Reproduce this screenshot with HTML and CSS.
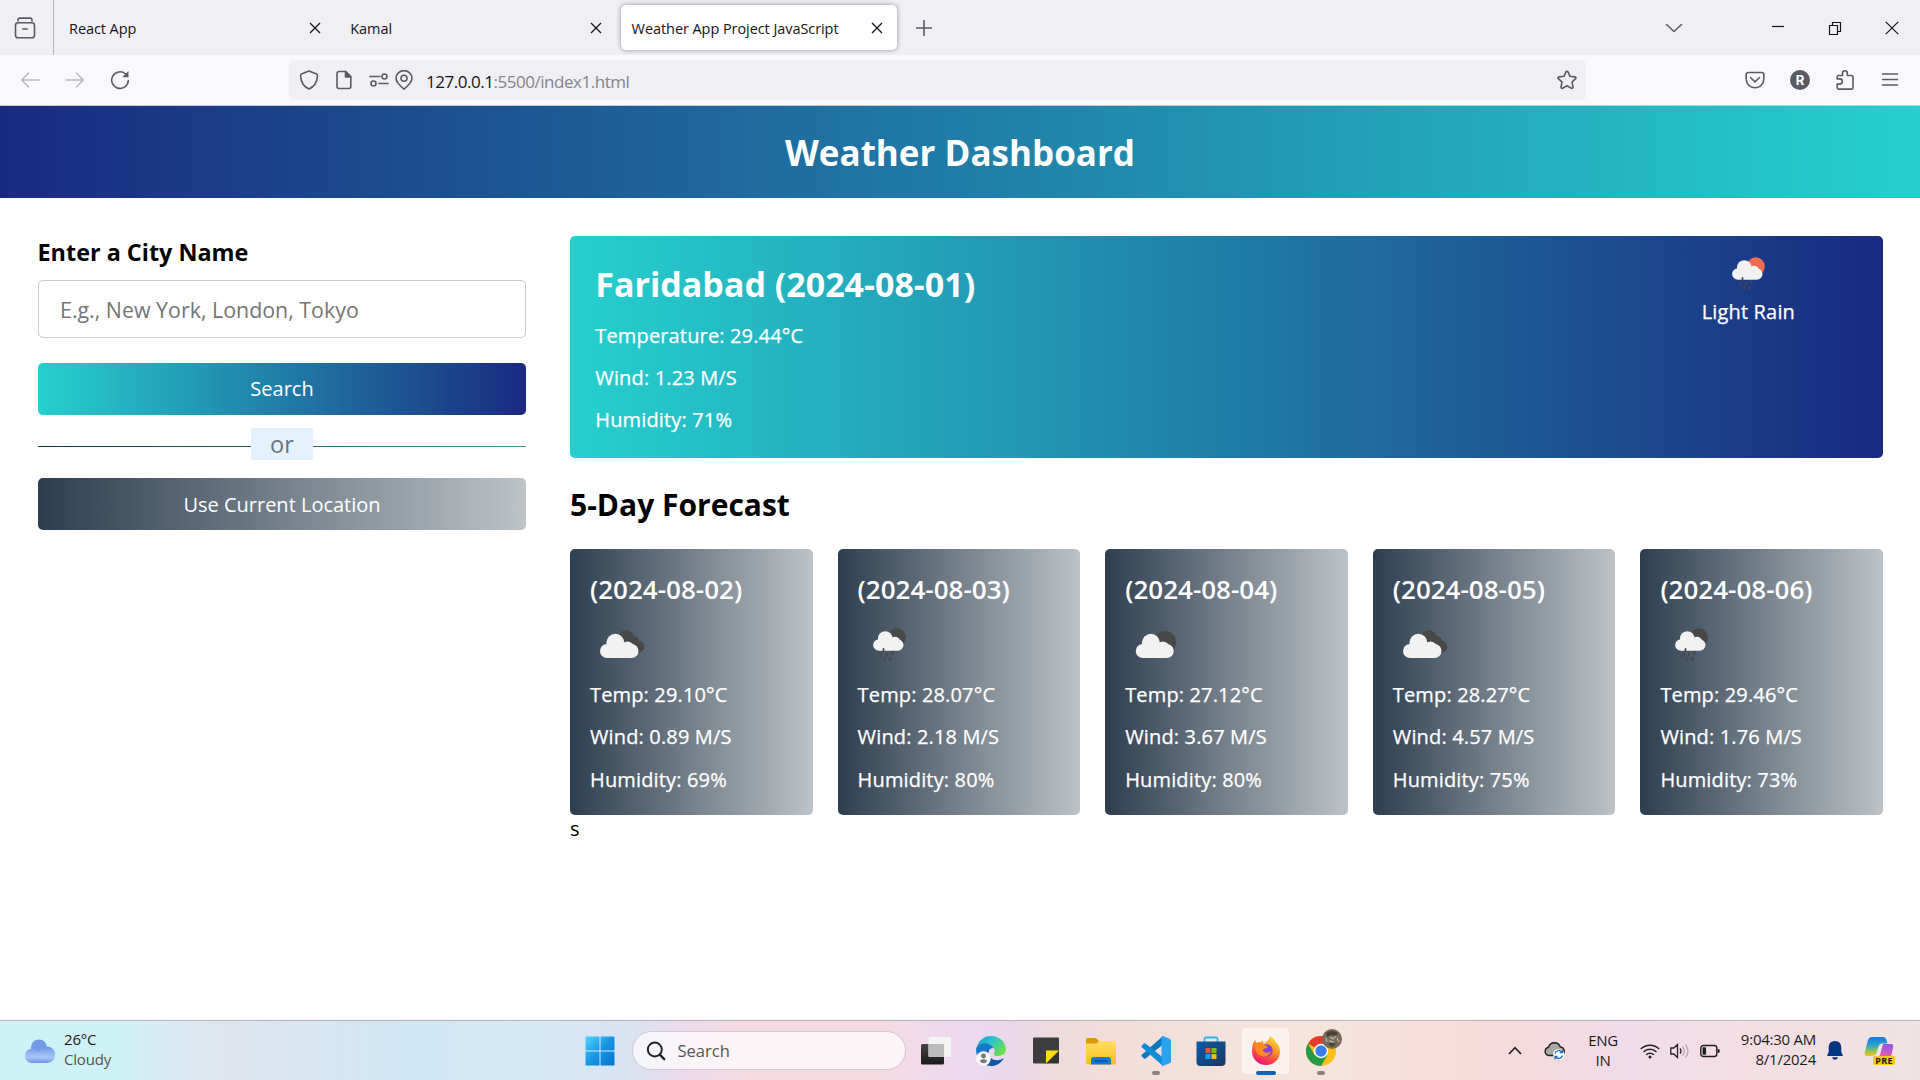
FILE: index.html
```html
<!DOCTYPE html>
<html lang="en">
<head>
<meta charset="utf-8">
<title>Weather App Project JavaScript</title>
<link rel="stylesheet" href="styles.css">
</head>
<body>
<svg class="defs" aria-hidden="true">
  <symbol id="cloudy" viewBox="0 0 50 50">
    <g fill="#484848"><circle cx="28.8" cy="19.8" r="6.1"/><circle cx="35" cy="22.6" r="4.2"/><circle cx="38.6" cy="26.9" r="4.8"/><path d="M24 20h14v11H28z"/></g>
    <g fill="#f2f2f2"><rect x="8" y="24.8" width="30.8" height="11.2" rx="5.6"/><circle cx="20.3" cy="23.8" r="7.2"/><circle cx="30" cy="27.6" r="4.9"/><path d="M14 26h18v8H14z"/></g>
  </symbol>
  <symbol id="partly" viewBox="0 0 50 50">
    <circle cx="32" cy="23.3" r="8.9" fill="#484848"/>
    <g fill="#f2f2f2"><rect x="8.6" y="24.8" width="30.4" height="11.2" rx="5.6"/><circle cx="20.7" cy="23.8" r="7.2"/><circle cx="30.3" cy="27.6" r="4.9"/><path d="M14 26h18v8H14z"/></g>
  </symbol>
  <symbol id="rain" viewBox="0 0 50 50">
    <circle cx="31" cy="19.5" r="7.3" fill="currentColor"/>
    <g fill="#f2f2f2"><rect x="12.1" y="21" width="24.3" height="9.2" rx="4.6"/><circle cx="21.8" cy="20.4" r="5.8"/><circle cx="29.6" cy="23" r="4"/><path d="M17 22h14v7H17z"/></g>
    <path d="M20.4 28.6v2.200M19 32.600l-1 1.800M23.600 32.400l-1 1.800M28 31l-1 1.800M22 36.400l-.6 1.100M26.300 35.800l-.9 1.600" stroke="#484848" stroke-width="1.400" stroke-linecap="round"/>
  </symbol>
  <symbol id="x" viewBox="0 0 12 12"><path d="M1 1l10 10M11 1L1 11" stroke="currentColor" stroke-width="1.3" fill="none"/></symbol>
</svg>

<div class="tabstrip">
  <div class="view"><svg width="22" height="22" viewBox="0 0 22 22" class="line"><path d="M4 4V3a2 2 0 0 1 2-1.900h10A2 2 0 0 1 18 3v1"/><rect x="1.5" y="5.8" width="19" height="15" rx="2.6"/><path d="M8.8 12h4.400"/></svg></div>
  <div class="tab"><span class="tab-text">React App</span><svg class="close"><use href="#x"/></svg></div>
  <div class="tab"><span class="tab-text">Kamal</span><svg class="close"><use href="#x"/></svg></div>
  <div class="tab active"><span class="tab-text">Weather App Project JavaScript</span><svg class="close"><use href="#x"/></svg></div>
  <svg class="plus line" width="16" height="16" viewBox="0 0 16 16"><path d="M8 .5v15M.5 8h15"/></svg>
  <div class="window-buttons">
    <svg width="18" height="18" viewBox="0 0 18 18" class="line"><path d="M1.500 5.500l7.500 7 7.500-7"/></svg>
    <svg width="14" height="14" viewBox="0 0 14 14" class="thin"><path d="M1 5.500h12"/></svg>
    <svg width="14" height="14" viewBox="0 0 14 14" class="thin"><path d="M1.500 4.500h8v9h-8zM4.500 4.500v-3h8v9h-3"/></svg>
    <svg width="14" height="14" viewBox="0 0 14 14" class="thin"><path d="M.8.8l12.400 12.400M13.200.8L.8 13.200"/></svg>
  </div>
</div>

<div class="toolbar">
  <div class="nav">
    <svg width="20" height="20" viewBox="0 0 20 20" class="line dim"><path d="M19 10H2M8.500 3.200L1.700 10l6.800 6.800"/></svg>
    <svg width="20" height="20" viewBox="0 0 20 20" class="line dim"><path d="M1 10h17M11.500 3.200l6.800 6.800-6.800 6.800"/></svg>
    <svg width="20" height="20" viewBox="0 0 20 20" class="line"><path d="M15.600 4A8.300 8.300 0 1 0 18.300 10.500"/><path d="M18.500 1v6.200h-6.200z" fill="#5b5b66" stroke="none"/></svg>
  </div>
  <div class="urlbar">
    <svg width="20" height="20" viewBox="0 0 20 20" class="line"><path d="M10 1l7.600 3c.9.400.9 1 .800 2.400C18 12.500 15.500 16.500 10 19 4.500 16.500 2 12.500 1.600 6.400 1.500 5 1.500 4.400 2.400 4z"/></svg>
    <svg width="20" height="20" viewBox="0 0 20 20" class="line"><path d="M5 1.500h6.800l5 5v10a2 2 0 0 1-2 2H5a2 2 0 0 1-2-2v-13a2 2 0 0 1 2-2z"/><path d="M11.500 1.500v5.500h5.300z" fill="#5b5b66"/></svg>
    <svg width="20" height="20" viewBox="0 0 20 20" class="line"><path d="M1 6.500h10M10 13.500h9"/><circle cx="15.500" cy="6.500" r="2.500"/><circle cx="4.500" cy="13.500" r="2.500"/></svg>
    <svg width="20" height="20" viewBox="0 0 20 20" class="line pin"><path d="M10 19.200C5.500 15.500 2 12 2 8.300a8 7.700 0 0 1 16 0c0 3.700-3.500 7.200-8 10.900z"/><circle cx="10" cy="8.300" r="3"/></svg>
    <span class="url"><b>127.0.0.1</b>:5500/index1.html</span>
    <svg width="20" height="20" viewBox="0 0 20 20" class="line star"><path d="M10 1.200c.5 0 .8.300 1 .700l2 4.400 4.900.600c1 .1 1.400 1.200.7 1.800l-3.600 3.400 1 4.900c.1.900-.8 1.600-1.600 1.200L10 15.800l-4.400 2.400c-.8.400-1.700-.3-1.600-1.200l1-4.900L1.400 8.700c-.7-.6-.3-1.700.7-1.800L7 6.300l2-4.400c.2-.4.500-.7 1-.7z"/></svg>
  </div>
  <div class="tools">
    <svg width="20" height="20" viewBox="0 0 20 20" class="line"><path d="M3.200 2.500h13.600a2 2 0 0 1 2 2V9a8.800 8.800 0 0 1-17.600 0V4.500a2 2 0 0 1 2-2z"/><path d="M5.500 7.500L10 11.800l4.500-4.300"/></svg>
    <span class="account">R</span>
    <svg width="20" height="20" viewBox="0 0 20 20" class="line"><path d="M2.200 8.300V6.800a1.300 1.300 0 0 1 1.300-1.300h4V3.200a2.400 2.400 0 0 1 4.800 0v2.300h4.400A1.300 1.300 0 0 1 18 6.800v11a1.300 1.300 0 0 1-1.300 1.300H3.500a1.300 1.300 0 0 1-1.300-1.300v-3.700h2.600a2.600 2.600 0 0 0 0-5.200H2.200z"/></svg>
    <svg width="20" height="20" viewBox="0 0 20 20" class="line"><path d="M2.500 4h15M2.500 9.500h15M2.500 15h15"/></svg>
  </div>
</div>

<main class="page">
  <h1>Weather Dashboard</h1>
  <div class="container">
    <section class="weather-input">
      <h3>Enter a City Name</h3>
      <input class="city-input" type="text" placeholder="E.g., New York, London, Tokyo">
      <button class="search-btn">Search</button>
      <div class="separator"><span>or</span></div>
      <button class="location-btn">Use Current Location</button>
    </section>
    <section class="weather-data">
      <div class="current-weather">
        <div>
          <h2>Faridabad (2024-08-01)</h2>
          <h6>Temperature: 29.44°C</h6>
          <h6>Wind: 1.23 M/S</h6>
          <h6>Humidity: 71%</h6>
        </div>
        <div class="condition">
          <svg class="wicon day"><use href="#rain"/></svg>
          <h6>Light Rain</h6>
        </div>
      </div>
      <div class="days-forecast">
        <h2>5-Day Forecast</h2>
        <ul class="weather-cards">
          <li class="card"><h3>(2024-08-02)</h3><svg class="wicon"><use href="#cloudy"/></svg><h6>Temp: 29.10°C</h6><h6>Wind: 0.89 M/S</h6><h6>Humidity: 69%</h6></li>
          <li class="card"><h3>(2024-08-03)</h3><svg class="wicon"><use href="#rain"/></svg><h6>Temp: 28.07°C</h6><h6>Wind: 2.18 M/S</h6><h6>Humidity: 80%</h6></li>
          <li class="card"><h3>(2024-08-04)</h3><svg class="wicon"><use href="#partly"/></svg><h6>Temp: 27.12°C</h6><h6>Wind: 3.67 M/S</h6><h6>Humidity: 80%</h6></li>
          <li class="card"><h3>(2024-08-05)</h3><svg class="wicon"><use href="#cloudy"/></svg><h6>Temp: 28.27°C</h6><h6>Wind: 4.57 M/S</h6><h6>Humidity: 75%</h6></li>
          <li class="card"><h3>(2024-08-06)</h3><svg class="wicon"><use href="#rain"/></svg><h6>Temp: 29.46°C</h6><h6>Wind: 1.76 M/S</h6><h6>Humidity: 73%</h6></li>
        </ul>
        s
      </div>
    </section>
  </div>
</main>

<footer class="taskbar">
  <div class="widget">
    <svg width="31" height="26" viewBox="0 0 31 26"><defs><linearGradient id="wc" x2="0" y2="1"><stop offset="0" stop-color="#6f95e4"/><stop offset=".65" stop-color="#a9c8f8"/><stop offset="1" stop-color="#6c92e4"/></linearGradient></defs><circle cx="15" cy="9.500" r="8" fill="#7499e6"/><path d="M7.500 25a7.200 7.200 0 0 1-.5-14.300c4-.5 6 1.500 8 3.300 1.500-4 4-5.600 8-5.500A8.200 8.200 0 0 1 23 25z" fill="url(#wc)"/></svg>
    <div class="widget-text"><span>26°C</span><span class="soft">Cloudy</span></div>
  </div>
  <div class="apps">
    <svg class="start" width="30" height="30" viewBox="0 0 30 30"><defs><linearGradient id="wn" x2="1" y2="1"><stop offset="0" stop-color="#4fd3fc"/><stop offset=".5" stop-color="#1795e2"/><stop offset="1" stop-color="#0173d3"/></linearGradient></defs><path d="M1.500.5H14.500V14.500H.5V1.500q0-1 1-1zM15.500.5h13q1 0 1 1V14.500h-14zM.5 15.500H14.500v14H1.500q-1 0-1-1zM15.500 15.500h14v13q0 1-1 1h-13z" fill="url(#wn)"/></svg>
    <div class="task-search"><svg width="20" height="20" viewBox="0 0 20 20"><circle cx="8.800" cy="8.500" r="7" fill="none" stroke="#222" stroke-width="1.900"/><path d="M13.800 13.600l4.400 4.600" stroke="#222" stroke-width="2.400" stroke-linecap="round"/></svg><span>Search</span></div>
    <div class="app"><svg width="30" height="30" viewBox="0 0 30 30"><defs><linearGradient id="tv" x2="0" y2="1"><stop offset="0" stop-color="#444"/><stop offset="1" stop-color="#1b1b1b"/></linearGradient></defs><rect x="0" y="8" width="23" height="20.500" rx="1.500" fill="url(#tv)"/><rect x="7.500" y="1" width="22.500" height="20" rx="1.200" fill="#f4f4f4"/><path d="M7.500 8H23v13H8.500q-1 0-1-1z" fill="#bcbcbc"/></svg></div>
    <div class="app"><svg width="30" height="30" viewBox="0 0 30 30"><defs><linearGradient id="e1" x2="1" y2=".6"><stop offset="0" stop-color="#1a8fd8"/><stop offset=".5" stop-color="#2cc3d0"/><stop offset="1" stop-color="#6be04a"/></linearGradient></defs><path d="M.5 12C3 3 9 0 15 0c9 0 15 7 15 13 0 5-4 7-8 7-3.500 0-5-1.500-4-3 2-3 0-6-4-6C8 11 4 15 4 20z" fill="url(#e1)"/><path d="M.5 12C4 6 14 6 17 12c-5 0-6 6-2 10 3.500 3 8 3 13 0-3 5.500-8 8-13 8C5 30-.5 21 .5 12z" fill="#0f59a8"/><path d="M.5 12C4 6 14 6 17 12c-6 0-8 5-6.500 11L2 22Q0 18 .5 12z" fill="#1678c8"/><circle cx="7.500" cy="22.500" r="7.300" fill="#f8f8f8"/><circle cx="7.500" cy="20" r="2.400" fill="#777"/><path d="M4 24.200q3.500-1.800 7 0c0 4-7 4-7 0z" fill="#777"/></svg></div>
    <div class="app"><svg width="26" height="27" viewBox="0 0 26 27"><path d="M1 .5h24q1 0 1 1V14L14 26.500H1q-1 0-1-1v-24q0-1 1-1z" fill="#3d3d3d"/><path d="M26 13.500v12q0 1-1 1H13z" fill="#333"/><path d="M13 13.500h13L13 26.500z" fill="#ffdb0c"/></svg></div>
    <div class="app"><svg width="30" height="30" viewBox="0 0 30 30"><defs><linearGradient id="fd" x2="0" y2="1"><stop offset="0" stop-color="#ffdd63"/><stop offset="1" stop-color="#fbbd20"/></linearGradient></defs><path d="M0 3.500q0-1.500 1.500-1.500H9q1 0 1.700.700L13 5v4H0z" fill="#d99a0c"/><path d="M0 7.500h10.500L13 5h15.500Q30 5 30 6.500V27q0 1.500-1.500 1.500h-27Q0 28.500 0 27z" fill="url(#fd)"/><path d="M5 28.500V24q0-3 3-3h14q3 0 3 3v4.500z" fill="#1477cc"/><path d="M8.500 25h13" stroke="#0a4b93" stroke-width="1.300"/></svg></div>
    <div class="app run"><svg width="30" height="30" viewBox="0 0 30 30"><path d="M22 0v8.500L4.500 22.500q-.8.500-1.500 0L.8 20.600q-1-.9 0-1.900z" fill="#0a77bf"/><path d="M.8 11.300q-1-1 0-1.900L3 7.500q.7-.500 1.500 0L22 21.500V30z" fill="#108bd4"/><path d="M22 0l7 3q1 .5 1 1.500v21q0 1-1 1.500l-7 3q-1.500.2-1.500-1.500v-27Q20.500-.2 22 0z" fill="#27a3f0"/></svg></div>
    <div class="app"><svg width="30" height="30" viewBox="0 0 30 30"><defs><linearGradient id="st" x2="1" y2="1"><stop offset="0" stop-color="#0a5cab"/><stop offset="1" stop-color="#1f355e"/></linearGradient></defs><path d="M8.500 6V3q0-1.500 1.500-1.500h10q1.500 0 1.500 1.500v3" stroke="#27b8f2" stroke-width="1.800" fill="none"/><path d="M.5 5.500h29V26q0 4-4 4h-21q-4 0-4-4z" fill="url(#st)"/><path d="M9.500 12h5v5h-5z" fill="#f35325"/><path d="M15.500 12h5v5h-5z" fill="#81bc06"/><path d="M9.500 18h5v5h-5z" fill="#05a6f0"/><path d="M15.500 18h5v5h-5z" fill="#ffba08"/></svg></div>
    <div class="app current"><svg width="28" height="29" viewBox="0 0 28 29"><defs><linearGradient id="ff" x1=".8" x2=".3" y2="1"><stop offset="0" stop-color="#ffe43c"/><stop offset=".4" stop-color="#ff9625"/><stop offset=".75" stop-color="#ff3d48"/><stop offset="1" stop-color="#e01483"/></linearGradient></defs><path d="M18 0c3 1.500 5 4 6 6.500 2 1 4 5 4 9C28 23 22 29 14 29S0 23 0 15.500C0 10 1 6.500 3 4l1.500 3C6 6 7 6 8.500 6.200L11 4.500 11.500 8C15 5 17 4 18 0z" fill="url(#ff)"/><circle cx="14.500" cy="14.500" r="6.200" fill="#8a3fdc"/><path d="M3 8c4-2 8-1 10 1.500l3 1c-1 2.500-5 1.500-5 4 1 2.500 5 3 8 .5-1 5-7 7-11 4.500C4 17 2 12 3 8z" fill="#ff8a1f"/></svg></div>
    <div class="app run chrome"><svg width="30" height="30" viewBox="0 0 30 30"><circle cx="15" cy="15" r="15" fill="#fbc116"/><path d="M15 15L2 7.500a15 15 0 0 1 26 0z" fill="#e33b2e"/><path d="M2 7.500A15 15 0 0 0 15 30l6.500-11.300L8.500 18.700z" fill="#259b48"/><circle cx="15" cy="15" r="7.200" fill="#fff"/><circle cx="15" cy="15" r="5.700" fill="#3b7ded"/></svg>
      <svg class="avatar" width="20" height="20" viewBox="0 0 20 20"><circle cx="10" cy="10" r="10" fill="#786a58"/><path d="M4 4q6-4 12 0l-2 3-5-1-4 2zM6 15q4-2 8 0l-4 3z" fill="#4b4036"/><path d="M8 8l3 2 3-3M7 12l5 1M15 9l2 4M4 9l1 4" stroke="#b3b3a2" stroke-width="1.300" fill="none"/></svg></div>
  </div>
  <div class="tray">
    <svg class="up" width="14" height="9" viewBox="0 0 14 9"><path d="M1 8l6-6.300L13 8" fill="none" stroke="#222" stroke-width="1.700"/></svg>
    <svg class="drive" width="21" height="18" viewBox="0 0 21 18"><path d="M5 13.500a4.200 4.200 0 0 1-.5-8.300C5.500 2 8 .8 10.500.8c3 0 5 1.700 5.800 4.200 2.500.2 3.900 2 3.900 4.200 0 2.700-1.800 4.300-4.200 4.300z" fill="#a9a7a8" stroke="#222" stroke-width="1.400"/><circle cx="14.700" cy="12.500" r="5.500" fill="#fff"/><path d="M11 11.500a4 4 0 0 1 7-1.500M18.500 13.500a4 4 0 0 1-7 1.500M18.500 8v2.600h-2.700M11 17.200v-2.700h2.600" fill="none" stroke="#1873c9" stroke-width="1.300"/></svg>
    <div class="lang"><span>ENG</span><span>IN</span></div>
    <div class="status">
      <svg width="20" height="16" viewBox="0 0 20 16" fill="none" stroke="#222" stroke-width="1.400"><path d="M.8 6a13 13 0 0 1 18.400 0M3.500 9a9.200 9.200 0 0 1 13 0M6.200 11.800a5.400 5.400 0 0 1 7.600 0"/><circle cx="10" cy="14" r="1.500" fill="#222" stroke="none"/></svg>
      <svg width="20" height="16" viewBox="0 0 20 16" fill="none" stroke="#222" stroke-width="1.300"><path d="M.8 5h3L7.500 1.500v13L3.800 11h-3zM10 5.500q1.800 2.500 0 5"/><path d="M12.500 3.500q3.500 4.500 0 9M15.500 1.500q5 6.500 0 13" stroke="#b9a9b2"/></svg>
      <svg width="20" height="14" viewBox="0 0 20 14"><rect x=".8" y="1.500" width="16" height="11" rx="2.500" fill="none" stroke="#222" stroke-width="1.400"/><rect x="2.500" y="3.300" width="3.600" height="7.400" rx=".8" fill="#222"/><path d="M17.500 5h1q1.300 0 1.300 2t-1.300 2h-1z" fill="#222"/></svg>
    </div>
    <div class="clock"><span>9:04:30 AM</span><span>8/1/2024</span></div>
    <svg class="bell" width="16" height="19" viewBox="0 0 16 19"><path d="M8 0c4 0 6.300 2.800 6.300 6.500V11l1.500 3.200q.3.900-.6.900H.8q-.9 0-.6-.9L1.700 11V6.500C1.700 2.800 4 0 8 0zM5 16.300h6q-.8 2.500-3 2.500t-3-2.500z" fill="#04357f"/></svg>
    <div class="copilot"><svg width="30" height="26" viewBox="0 0 30 26"><defs><linearGradient id="c1" x2="0" y2="1"><stop offset="0" stop-color="#1677dc"/><stop offset=".45" stop-color="#2fa6cf"/><stop offset=".7" stop-color="#83c152"/><stop offset="1" stop-color="#f4c52c"/></linearGradient><linearGradient id="c2" x2="0" y2="1"><stop offset="0" stop-color="#8a57ea"/><stop offset=".6" stop-color="#da59b8"/><stop offset="1" stop-color="#f5804f"/></linearGradient></defs><path d="M8 1h11q2.500 0 3.500 3l1 3.500h-5q-3 0-4 3L12 18q-.8 2-3.500 2H3Q0 20 .8 16.500l3-12Q5 1 8 1z" fill="url(#c1)"/><path d="M19 8h8q2.500 0 2.200 3L27 21q-1 4-4 4h-8q-3 0-3.500-4h1.500q2.500 0 3.300-3z" fill="url(#c2)"/></svg><span>PRE</span></div>
  </div>
</footer>
</body>
</html>
```
FILE: styles.css
```css
* { margin: 0; padding: 0; box-sizing: border-box; }
html { font-size: 20px; }
body {
  width: 1920px; height: 1080px; overflow: hidden;
  display: flex; flex-direction: column;
  background: #fff; color: #000;
  font-family: "Open Sans", sans-serif;
}
svg { display: block; flex: none; }
.defs { width: 0; height: 0; position: absolute; }
.line { fill: none; stroke: #5b5b66; stroke-width: 1.6; stroke-linecap: round; stroke-linejoin: round; }
.line.dim { stroke: #b9b9be; }
.thin { fill: none; stroke: #15141a; stroke-width: 1.2; }

/* Tab strip */
.tabstrip { flex: none; height: 55px; display: flex; align-items: center; background: #f0eff4; }
.view { width: 54px; height: 55px; padding-left: 14px; display: flex; align-items: center; border-right: 1px solid #b5b4bb; margin-right: 2px; }
.tab { width: 276.3px; height: 45px; margin: 0 2.5px; padding: 0 14px 0 10.5px; display: flex; align-items: center; justify-content: space-between; border-radius: 5px; color: #15141a; }
.tab.active { background: #fff; box-shadow: 0 0 5px rgba(0, 0, 0, .4); }
.tab-text { font-size: 14.5px; white-space: nowrap; letter-spacing: -.07px; padding-top: 2px; }
.close { width: 12px; height: 12px; }
.plus { margin-left: 16px; }
.window-buttons { margin-left: auto; display: flex; align-items: center; padding-right: 21px; }
.window-buttons svg:nth-child(1) { margin-right: 88px; }
.window-buttons svg:nth-child(2) { margin-right: 43px; }
.window-buttons svg:nth-child(3) { margin-right: 43px; }

/* Navigation bar */
.toolbar { flex: none; height: 51px; display: flex; align-items: center; background: #f9f9fb; border-bottom: 1px solid #cccccf; }
.nav { width: 289px; padding-left: 20px; display: flex; gap: 25px; }
.urlbar { width: 1297px; height: 40px; padding: 0 9px 0 10px; display: flex; align-items: center; background: #f0eff4; border-radius: 5px; }
.urlbar .line { margin-right: 15px; }
.urlbar svg.line:nth-of-type(3) { margin-right: 5px; }
.urlbar svg.pin { margin-right: 12px; }
.urlbar svg.star { margin: 0 0 0 auto; }
.url { font-size: 17px; letter-spacing: -.47px; color: #85848b; padding-top: 2px; }
.url b { font-weight: 400; color: #15141a; }
.tools { margin-left: auto; padding-right: 20px; display: flex; gap: 25px; }
.account { width: 20px; height: 20px; border-radius: 50%; background: #5b5b66; color: #fff; font: 700 13px/20px Inter, sans-serif; text-align: center; }

/* Dashboard */
.page { flex: 1; min-height: 0; }
h1 { background: linear-gradient(to right, #1a2980, #26d0ce); font-size: 1.75rem; text-align: center; padding: 22.5px 0; color: #fff; line-height: 47px; }
.container { display: flex; gap: 44px; padding: 38px 37px 38px 38px; }
.weather-input { width: 488px; flex: none; }
.weather-input h3 { font-size: 1.17rem; line-height: 33px; text-indent: -.5px; }
.city-input { display: block; width: 100%; height: 58px; margin: 11px 0 25px; padding: 0 21px; border: 1px solid #ccc; border-radius: 5px; outline: none; font: 1.07rem "Open Sans", sans-serif; }
.city-input::placeholder { color: #757575; opacity: 1; }
.search-btn, .location-btn { display: block; width: 100%; border: 0; border-radius: 5px; padding: 12px 0; color: #fff; font: 1rem/28px "Open Sans", sans-serif; }
.search-btn { background: linear-gradient(to right, #26d0ce, #1a2980); }
.location-btn { background: linear-gradient(to right, #2c3e50, #bdc3c7); padding: 13px 0 11px; }
.separator { height: 1px; margin: 31px 0; display: flex; align-items: center; justify-content: center; background: linear-gradient(to right, #093637, #44a08d); }
.separator span { background: #e3f2fd; color: #6c757d; font-size: 1.18rem; line-height: 32px; padding: 0 19px; margin-top: -5px; }
.weather-data { flex: 1; min-width: 0; }
h6 { margin-top: 15px; font-size: 1rem; font-weight: 500; line-height: 27.2px; letter-spacing: .15px; -webkit-text-stroke: .25px currentColor; }
.current-weather { display: flex; justify-content: space-between; padding: 25px 88px 24px 25.3px; border-radius: 5px; color: #fff; background: linear-gradient(to right, #26d0ce, #1a2980); }
.current-weather h2 { font-size: 1.7rem; line-height: 47px; margin-bottom: -1px; }
.condition { text-align: center; }
.condition .wicon { margin: -18.7px auto 0; }
.condition h6 { margin-top: -6.4px; }
.wicon { width: 62.5px; height: 62.5px; color: #484848; }
.wicon.day { color: #ec6e4c; }
.days-forecast > h2 { margin: 25px 0 23.4px; font-size: 1.5rem; line-height: 43px; }
.weather-cards { display: flex; gap: 25px; list-style: none; }
.card { flex: 1; padding: 22.5px 20px; border-radius: 5px; color: #fff; background: linear-gradient(to right, #2c3e50, #bdc3c7); }
.card h3 { font-size: 1.3rem; font-weight: 600; line-height: 35.4px; }
.card .wicon { margin: 6.2px 0 -9.4px; }

/* Taskbar */
.taskbar {
  flex: none; height: 60px; display: grid; grid-template-columns: 584px 765px 1fr; border-top: 1px solid #b7b2bc; color: #1c1c1c; font-size: 15px;
  background: linear-gradient(to right, #cef2f6 0, #cef1f6 110px, #dfe5ef 225px, #cfe7f6 410px, #d5e9f5 550px, #dbe1f0 640px, #efd9eb 690px, #f5dae2 740px, #f5dae2 880px, #eed9f1 965px, #ead8ea 1010px, #f0dbdc 1060px, #f3ded9 1140px, #f7e5dd 1300px, #f8dedc 1420px, #f7dadb 1510px, #f1dbe9 1630px, #f5dee4 1740px, #f1e0e2 1830px, #efe3e2 1920px);
}
.widget { display: flex; align-items: center; padding-left: 24px; gap: 9px; }
.widget-text { display: flex; flex-direction: column; line-height: 20px; letter-spacing: -.2px; padding-bottom: 4px; }
.soft { color: #555; }
.apps { display: flex; align-items: center; }
.start { margin-left: .5px; }
.task-search { width: 274px; height: 39px; margin-left: 17px; margin-right: 2.5px; padding-left: 13px; display: flex; align-items: center; gap: 12px; border: 1px solid #d5c8d2; border-radius: 20px; background: rgba(255, 255, 255, .7); color: #555; font-size: 16.5px; }
.app { width: 55px; height: 48px; display: flex; align-items: center; justify-content: center; position: relative; }
.current::before { content: ""; position: absolute; z-index: -1; inset: 0 3px; border: 1px solid #f2e4df; border-radius: 5px; background: #fcf3ef; }
.taskbar, .current { z-index: 0; }
.run::after, .current::after { content: ""; position: absolute; bottom: 0; width: 8px; height: 4px; border-radius: 2px; background: #8d8280; }
.current::after { width: 20px; background: #0565b8; }
.avatar { position: absolute; left: 29px; top: 2px; }
.tray { display: flex; align-items: center; }
.up { margin-left: 159px; }
.drive { margin-left: 22px; }
.lang { width: 40px; margin-left: 18px; display: flex; flex-direction: column; align-items: center; line-height: 20px; letter-spacing: -.3px; padding-bottom: 2px; }
.status { display: flex; align-items: center; gap: 10px; margin-left: 17px; }
.clock { width: 96px; display: flex; flex-direction: column; text-align: right; line-height: 20px; letter-spacing: -.25px; padding-bottom: 4px; }
.bell { margin-left: 11px; }
.copilot { margin-left: 21px; width: 31px; height: 29px; position: relative; }
.copilot span { position: absolute; right: 0; bottom: 0; padding: 0 2px; background: #fdc80d; border-radius: 2px; font: 700 9px/9px "Open Sans", sans-serif; letter-spacing: .4px; }
```
